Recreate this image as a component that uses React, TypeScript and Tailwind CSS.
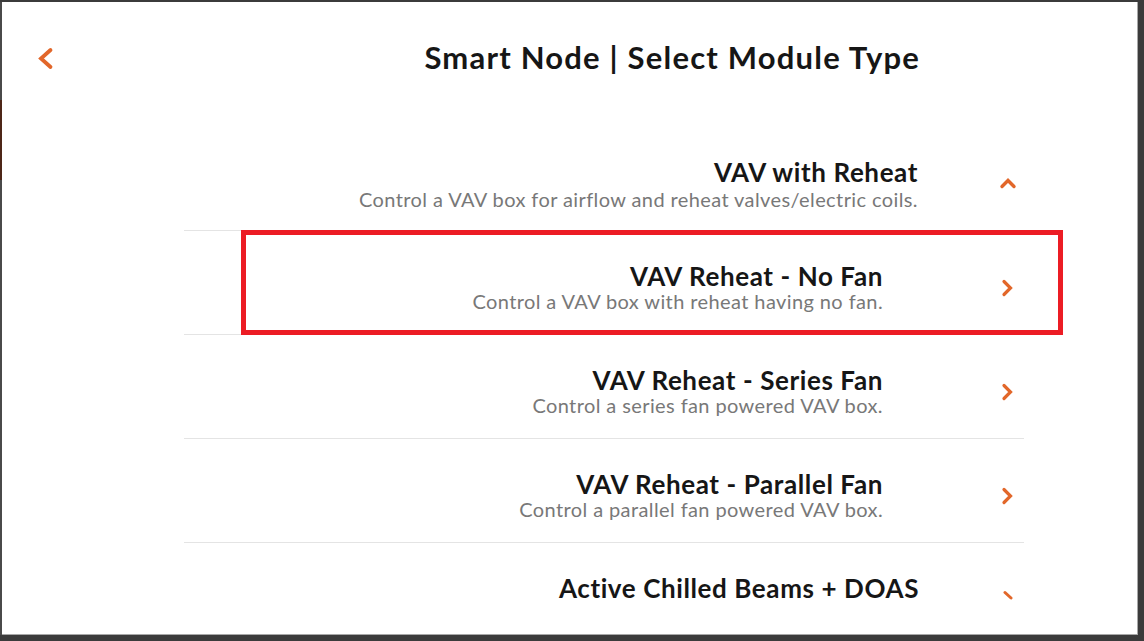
import React from 'react';

const ORANGE = '#e2672a';

const BackChevron = () => (
    <svg width="17" height="23" viewBox="0 0 17 23" fill="none">
        <path d="M13.5 3 L4 11.5 L13.5 20" stroke={ORANGE} strokeWidth="3.8" strokeLinecap="round" strokeLinejoin="miter" />
    </svg>
);

const UpChevron = () => (
    <svg width="18" height="12" viewBox="0 0 18 12" fill="none">
        <path d="M3 9.5 L9 3.5 L15 9.5" stroke={ORANGE} strokeWidth="3.4" strokeLinecap="round" />
    </svg>
);

const RightChevron = () => (
    <svg width="14" height="18" viewBox="0 0 14 18" fill="none">
        <path d="M4 2.5 L10.5 9 L4 15.5" stroke={ORANGE} strokeWidth="3.2" strokeLinecap="round" />
    </svg>
);

const HalfChevron = () => (
    <svg width="14" height="10" viewBox="0 0 14 10" fill="none">
        <path d="M3 2.5 L9 8" stroke={ORANGE} strokeWidth="3" strokeLinecap="round" />
    </svg>
);

const modules = [
    { title: 'VAV Reheat - No Fan', desc: 'Control a VAV box with reheat having no fan.', selected: true },
    { title: 'VAV Reheat - Series Fan', desc: 'Control a series fan powered VAV box.' },
    { title: 'VAV Reheat - Parallel Fan', desc: 'Control a parallel fan powered VAV box.' },
];

const App = () => {
    return (
        <div className="w-[1144px] h-[641px] bg-[#3b3b3b] flex flex-col overflow-hidden font-['Lato',sans-serif]">
            <div className="h-[2px] shrink-0" />
            <div className="flex flex-1 min-h-0">
                {/* left frame edge */}
                <div className="w-[2px] flex flex-col">
                    <div className="h-[98px] bg-[#4a4a4a]" />
                    <div className="h-[80px] bg-[#4e2618]" />
                    <div className="flex-1 bg-[#4a4a4a]" />
                </div>

                <div className="flex-1 bg-white border-r border-b border-[#a8a8a8] overflow-hidden">
                    {/* header */}
                    <div className="flex items-start h-[73px] pt-[37px]">
                        <div className="ml-[35px] mt-[8px]">
                            <BackChevron />
                        </div>
                        <h1 className="flex-1 text-right text-[31px] leading-[36px] tracking-[1.2px] font-bold text-[#161616] mr-[217px]">
                            Smart Node | Select Module Type
                        </h1>
                    </div>

                    <div className="ml-[182px] mr-[113px]">
                        {/* group header */}
                        <div className="flex items-start justify-end pt-[82px] pb-[21px] border-b border-[#e4e4e4]">
                            <div className="text-right">
                                <p className="text-[26px] leading-[30px] tracking-[0.6px] font-bold text-[#161616]">VAV with Reheat</p>
                                <p className="mt-[2px] text-[20px] leading-[20px] tracking-[0.4px] text-[#787878]">Control a VAV box for airflow and reheat valves/electric coils.</p>
                            </div>
                            <div className="ml-[81px] mr-[7px] mt-[20px]">
                                <UpChevron />
                            </div>
                        </div>

                        {modules.map((m) => (
                            <div key={m.title} className="relative flex items-start justify-end pt-[30px] pb-[23px] border-b border-[#e4e4e4]">
                                <div className="text-right">
                                    <p className="text-[26px] leading-[30px] tracking-[0.6px] font-bold text-[#161616]">{m.title}</p>
                                    <p className="text-[20px] leading-[20px] tracking-[0.4px] text-[#787878]">{m.desc}</p>
                                </div>
                                <div className="ml-[117px] mr-[10px] mt-[18px]">
                                    <RightChevron />
                                </div>
                                {m.selected && (
                                    <div className="absolute left-[57px] -right-[39px] -top-[1px] -bottom-[1px] border-[5px] border-[#ec1c24]" />
                                )}
                            </div>
                        ))}

                        <div className="flex items-start justify-end pt-[30px]">
                            <p className="text-[26px] leading-[30px] tracking-[0.6px] font-bold text-[#161616]">Active Chilled Beams + DOAS</p>
                            <div className="ml-[83px] mr-[8px] mt-[17px]">
                                <HalfChevron />
                            </div>
                        </div>
                    </div>
                </div>

                <div className="w-[6px]" />
            </div>
            <div className="h-[6px] shrink-0" />
        </div>
    );
};

export default App;
